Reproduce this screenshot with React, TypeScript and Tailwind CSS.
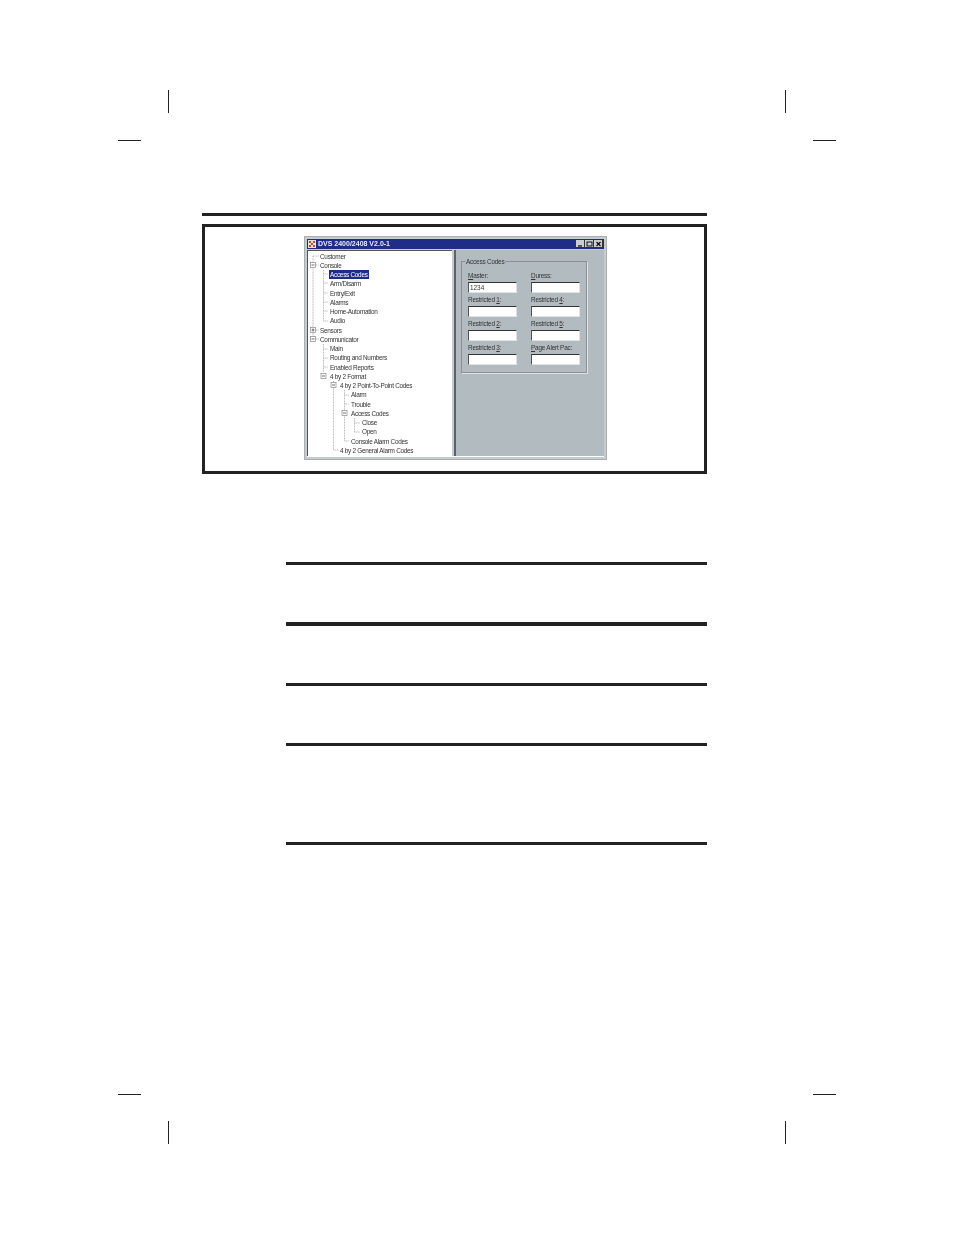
const font = "font-['Liberation_Sans',Arial,sans-serif]";

const rows: { t: string; x: number; sel?: boolean }[] = [
  { t: "Customer", x: 11 }, { t: "Console", x: 11 }, { t: "Access Codes", x: 21, sel: true },
  { t: "Arm/Disarm", x: 21 }, { t: "Entry/Exit", x: 21 }, { t: "Alarms", x: 21 },
  { t: "Home-Automation", x: 21 }, { t: "Audio", x: 21 }, { t: "Sensors", x: 11 },
  { t: "Communicator", x: 11 }, { t: "Main", x: 21 }, { t: "Routing and Numbers", x: 21 },
  { t: "Enabled Reports", x: 21 }, { t: "4 by 2 Format", x: 21 }, { t: "4 by 2 Point-To-Point Codes", x: 31 },
  { t: "Alarm", x: 42 }, { t: "Trouble", x: 42 }, { t: "Access Codes", x: 42 },
  { t: "Close", x: 53 }, { t: "Open", x: 53 }, { t: "Console Alarm Codes", x: 42 },
  { t: "4 by 2 General Alarm Codes", x: 31 },
];

const fields: { label: React.ReactNode; value?: string }[] = [
  { label: <><u>M</u>aster:</>, value: "1234" },
  { label: <><u>D</u>uress:</> },
  { label: <>Restricted <u>1</u>:</> },
  { label: <>Restricted <u>4</u>:</> },
  { label: <>Restricted <u>2</u>:</> },
  { label: <>Restricted <u>5</u>:</> },
  { label: <>Restricted <u>3</u>:</> },
  { label: <><u>P</u>age Alert Pac:</> },
];

function Box({ x, y, plus }: { x: number; y: number; plus?: boolean }) {
  return (
    <g>
      <rect x={x - 2.5} y={y - 2.5} width="5" height="5" fill="#fff" stroke="#888" strokeWidth="0.7" />
      <path d={`M${x - 1.5} ${y}H${x + 1.5}`} stroke="#333" strokeWidth="0.7" />
      {plus && <path d={`M${x} ${y - 1.5}V${y + 1.5}`} stroke="#333" strokeWidth="0.7" />}
    </g>
  );
}

function TreeLines() {
  const H = (x: number, y: number, x2: number) => `M${x} ${y}H${x2}`;
  const V = (x: number, y: number, y2: number) => `M${x} ${y}V${y2}`;
  const d = [
    V(5, 5, 88), H(5, 5, 11), H(8, 14, 11), H(8, 79, 11), H(8, 88, 11),
    V(15.5, 19, 70), ...[23, 32, 42, 51, 60, 70].map((y) => H(15.5, y, 20)),
    V(15.5, 93, 121), ...[98, 107, 116].map((y) => H(15.5, y, 20)),
    V(25.5, 130, 199), H(25.5, 199, 31),
    V(36.5, 139, 190), ...[144, 153, 190].map((y) => H(36.5, y, 41)),
    V(46.5, 167, 181), H(46.5, 172, 52), H(46.5, 181, 52),
  ].join(" ");
  return (
    <svg className="absolute left-0 top-0" width="146" height="207" viewBox="0 0 146 207">
      <path d={d} stroke="#999" strokeWidth="0.7" fill="none" strokeDasharray="1 0.6" />
      <Box x={5} y={14} />
      <Box x={5} y={79} plus />
      <Box x={5} y={88} />
      <Box x={15.5} y={125} />
      <Box x={25.5} y={134} />
      <Box x={36.5} y={162} />
    </svg>
  );
}

function WinButton({ kind }: { kind: "min" | "max" | "close" }) {
  return (
    <div className="w-[9px] h-[8px] bg-[#c9cfd1] border-r border-b border-[#333] flex items-center justify-center">
      <svg width="7" height="6" viewBox="0 0 7 6">
        {kind === "min" && <path d="M1 5H5" stroke="#000" strokeWidth="1.2" />}
        {kind === "max" && <rect x="1" y="1" width="5" height="4" fill="none" stroke="#000" strokeWidth="0.9" />}
        {kind === "close" && <path d="M1.5 1L5.5 5M5.5 1L1.5 5" stroke="#000" strokeWidth="1.1" />}
      </svg>
    </div>
  );
}

function Mark({ c }: { c: string }) {
  return <div className={`absolute bg-[#222] ${c}`} />;
}

export default function App() {
  return (
    <div className={`relative w-[954px] h-[1235px] bg-white overflow-hidden ${font}`}>
      <Mark c="left-[168px] top-[90px] w-px h-[23px]" />
      <Mark c="left-[785px] top-[90px] w-px h-[23px]" />
      <Mark c="left-[118px] top-[140px] w-[23px] h-px" />
      <Mark c="left-[813px] top-[140px] w-[23px] h-px" />
      <Mark c="left-[118px] top-[1094px] w-[23px] h-px" />
      <Mark c="left-[813px] top-[1094px] w-[23px] h-px" />
      <Mark c="left-[168px] top-[1121px] w-px h-[23px]" />
      <Mark c="left-[785px] top-[1121px] w-px h-[23px]" />

      <div className="pt-[213px] pl-[202px] w-[707px]">
        <div className="h-[3px] bg-[#222]" />
        <div className="mt-[8px] h-[250px] border-[3px] border-[#222] pt-[9px] pl-[99px]">
          <div className="w-[303px] h-[224px] bg-[#c6cbcd] border border-[#a9aeb0] p-[2px] flex flex-col blur-[0.3px]">
            <div className="h-[10px] bg-[#1f2d86] flex items-center justify-between pl-[1px] pr-[1px] shrink-0">
              <div className="flex items-center gap-[2px]">
                <svg width="8" height="8" viewBox="0 0 8 8">
                  <rect width="8" height="8" fill="#e8e0dc" />
                  <path d="M1 1H3V3H1ZM5 1H7V3H5ZM3 3H5V5H3ZM1 5H3V7H1ZM5 5H7V7H5Z" fill="#b8503c" />
                </svg>
                <span className="text-[7px] leading-[10px] font-bold text-[#e6e9f5]">DVS 2400/2408 V2.0-1</span>
              </div>
              <div className="flex items-center">
                <WinButton kind="min" />
                <WinButton kind="max" />
                <WinButton kind="close" />
              </div>
            </div>
            <div className="flex flex-1 mt-[1px] min-h-0 border-b border-white">
              <div className="relative w-[145px] bg-white border-l border-t border-[#555] pt-[0.4px] overflow-hidden shrink-0">
                <TreeLines />
                <div className="relative flex flex-col">
                  {rows.map((r, i) => (
                    <div key={i} className="h-[9.25px] flex items-center whitespace-nowrap text-[6.4px] tracking-[-0.27px] text-[#333]" style={{ paddingLeft: r.x }}>
                      <span className={r.sel ? "bg-[#1f2d86] text-white px-px leading-[9px]" : "px-px leading-[9px]"}>{r.t}</span>
                    </div>
                  ))}
                </div>
              </div>
              <div className="w-[2px] bg-[#c6cbcd] shrink-0" />
              <div className="w-[2px] bg-[#59636a] shrink-0" />
              <div className="flex-1 bg-[#b2bbbf] pt-[11px] pl-[5px]">
                <div className="relative w-[126px] h-[112px] border border-[#8a9094] shadow-[1px_1px_0_#dfe3e5] pt-[9px] pl-[6px]">
                  <span className="absolute left-[3px] top-[-4px] bg-[#b2bbbf] px-px text-[6.4px] tracking-[-0.2px] leading-[8px] text-[#333] whitespace-nowrap">Access Codes</span>
                  <div className="grid grid-cols-[49px_49px] gap-x-[14px] gap-y-[0.3px]">
                    {fields.map((f, i) => (
                      <div key={i} className="h-[23.7px] flex flex-col">
                        <div className="h-[10.7px] text-[6.4px] tracking-[-0.2px] leading-[9px] text-[#333] whitespace-nowrap">{f.label}</div>
                        <div className="h-[11px] bg-white border-t border-l border-t-[#333] border-l-[#555] border-b border-r border-b-[#dfe3e5] border-r-[#dfe3e5] pl-[1px] text-[6.4px] leading-[9px] text-[#333]">{f.value}</div>
                      </div>
                    ))}
                  </div>
                </div>
              </div>
            </div>
          </div>
        </div>

        <div className="ml-[84px] mt-[88px] flex flex-col">
          <div className="h-[3px] bg-[#222]" />
          <div className="h-[57px]" />
          <div className="h-[4px] bg-[#222]" />
          <div className="h-[57px]" />
          <div className="h-[3px] bg-[#222]" />
          <div className="h-[57px]" />
          <div className="h-[3px] bg-[#222]" />
          <div className="h-[96px]" />
          <div className="h-[3px] bg-[#222]" />
        </div>
      </div>
    </div>
  );
}
